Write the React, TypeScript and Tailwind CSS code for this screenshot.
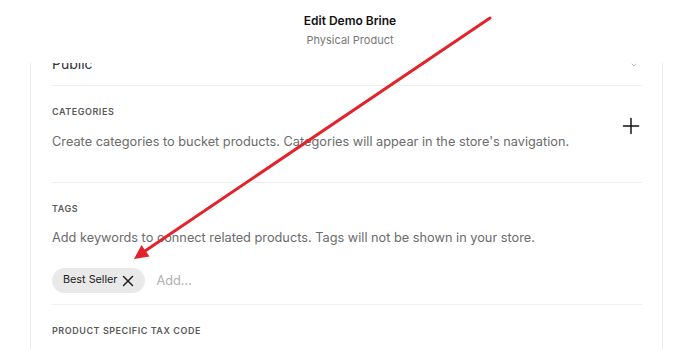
import { Plus, X, ChevronDown } from "lucide-react";

function Label({ children }: { children: string }) {
  return (
    <div className="text-[9px] leading-[12px] font-semibold tracking-[0.06em] text-[#5a5a5a] uppercase">
      {children}
    </div>
  );
}

export default function App() {
  return (
    <div className="relative w-[700px] h-[349px] overflow-hidden bg-white font-['Inter',sans-serif] text-[#222]">
      <header className="h-[63px] pt-[13px] flex flex-col items-center bg-white">
        <div className="text-[12px] leading-[16px] font-semibold text-[#111]">Edit Demo Brine</div>
        <div className="mt-[3px] text-[11px] leading-[16px] text-[#777]">Physical Product</div>
      </header>

      <div className="h-[286px] overflow-hidden">
        <div className="ml-[30px] mr-[37px] border-x border-[#ededed] pl-[21px] pr-[20px]">
          {/* visibility row, scrolled mostly out of view */}
          <div className="h-[46px] -mt-[23px] pb-[11px] flex items-end justify-between border-b border-[#efefef]">
            <span className="text-[14px] leading-[20px] text-[#333]">Public</span>
            <ChevronDown className="w-[8px] h-[8px] text-[#c4c4c4] mr-[4px] mb-[5px]" strokeWidth={3} />
          </div>

          <section className="pt-[20px] pb-[30px] flex items-center justify-between border-b border-[#efefef]">
            <div>
              <Label>Categories</Label>
              <p className="mt-[14px] text-[12.75px] leading-[20px] text-[#6b6b6b]">
                Create categories to bucket products. Categories will appear in the store's navigation.
              </p>
            </div>
            <Plus className="w-[26px] h-[26px] text-[#111] -mr-[2px] mb-[6px]" strokeWidth={1.35} />
          </section>

          <section className="pt-[20px] pb-[11px] border-b border-[#efefef]">
            <Label>Tags</Label>
            <p className="mt-[13px] text-[12.75px] leading-[20px] text-[#6b6b6b]">
              Add keywords to connect related products. Tags will not be shown in your store.
            </p>
            <div className="mt-[20px] flex items-center gap-[11px]">
              <span className="h-[25px] pl-[11px] pr-[8px] rounded-full bg-[#e9e9e9] flex items-center text-[10.8px] text-[#222]">
                Best Seller
                <X className="w-[18px] h-[18px] ml-[2px] text-[#222]" strokeWidth={2} />
              </span>
              <span className="text-[12.75px] text-[#b0b0b0]">Add...</span>
            </div>
          </section>

          <section className="pt-[20px] pb-[20px]">
            <Label>Product Specific Tax Code</Label>
          </section>
        </div>
      </div>

      <svg className="absolute inset-0 pointer-events-none" width="700" height="349" viewBox="0 0 700 349">
        <line x1="490" y1="18" x2="145" y2="251" stroke="#e2232b" strokeWidth="3" strokeLinecap="round" />
        <polygon points="134,259 149.5,256.5 141.5,245" fill="#e2232b" />
      </svg>
    </div>
  );
}
